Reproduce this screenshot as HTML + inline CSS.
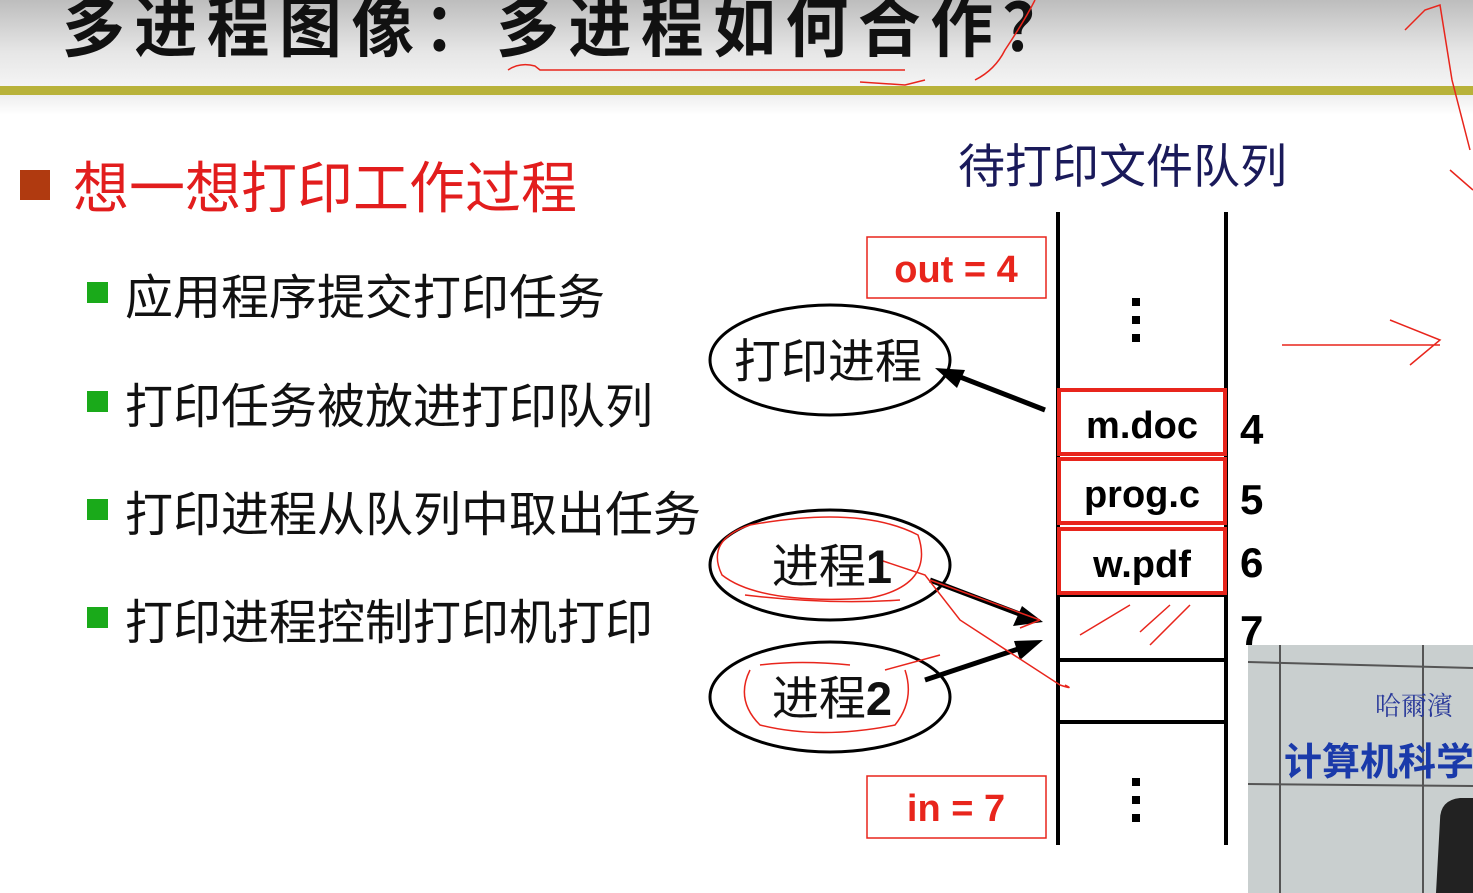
<!DOCTYPE html>
<html><head><meta charset="utf-8"><style>
html,body{margin:0;padding:0;width:1473px;height:893px;overflow:hidden;background:#fff;font-family:"Liberation Sans","Noto Sans CJK SC",sans-serif}
.a{position:absolute;white-space:nowrap}
</style></head><body>
<div class="a" style="left:0;top:0;width:1473px;height:86px;background:linear-gradient(#bdbdbd,#e6e6e6 60%,#f4f4f4)"></div>
<div class="a" style="left:0;top:86px;width:1473px;height:9px;background:#b8b23a"></div>
<div class="a" style="left:0;top:95px;width:1473px;height:20px;background:linear-gradient(#eee,#fff)"></div>
<div class="a" style="left:62px;top:-26px;font-family:'Noto Sans CJK SC',sans-serif;font-size:58px;letter-spacing:9px;font-weight:bold;color:#111;transform:scale(1.08,1.15);transform-origin:left top">多进程图像：多进程如何合作？</div>
<div class="a" style="left:20px;top:170px;width:30px;height:30px;background:#b03a10"></div>
<div class="a" style="left:73px;top:144px;font-size:56px;color:#e21d1d">想一想打印工作过程</div>
<div class="a" style="left:87px;top:282px;width:21px;height:21px;background:#1aaa1a"></div>
<div class="a" style="left:125px;top:258px;font-size:48px;color:#111">应用程序提交打印任务</div>
<div class="a" style="left:87px;top:391px;width:21px;height:21px;background:#1aaa1a"></div>
<div class="a" style="left:125px;top:367px;font-size:48px;color:#111">打印任务被放进打印队列</div>
<div class="a" style="left:87px;top:499px;width:21px;height:21px;background:#1aaa1a"></div>
<div class="a" style="left:125px;top:475px;font-size:48px;color:#111">打印进程从队列中取出任务</div>
<div class="a" style="left:87px;top:607px;width:21px;height:21px;background:#1aaa1a"></div>
<div class="a" style="left:125px;top:583px;font-size:48px;color:#111">打印进程控制打印机打印</div>
<div class="a" style="left:958px;top:128px;font-size:47px;color:#1a1a5a">待打印文件队列</div>
<div class="a" style="left:1248px;top:645px;width:225px;height:248px;background:#c9cfcf"></div>
<svg class="a" style="left:0;top:0" width="1473" height="893">
<g stroke="#555" stroke-width="2"><line x1="1248" y1="662" x2="1473" y2="668"/><line x1="1248" y1="784" x2="1473" y2="786"/><line x1="1280" y1="645" x2="1280" y2="893"/><line x1="1423" y1="645" x2="1423" y2="893"/></g>
<text x="1375" y="715" font-size="26" fill="#2a3a9a" font-family="Noto Serif CJK SC,serif">哈爾濱</text>
<text x="1284" y="775" font-size="38" font-weight="bold" fill="#1a3aaa" font-family="Noto Sans CJK SC,sans-serif">计算机科学</text>
<path d="M1440 820 Q1440 800 1460 798 L1473 798 L1473 893 L1436 893 Z" fill="#222"/>
<g stroke="#000" stroke-width="4" fill="none">
<line x1="1058" y1="212" x2="1058" y2="845"/><line x1="1226" y1="212" x2="1226" y2="845"/>
<line x1="1058" y1="595" x2="1226" y2="595"/><line x1="1058" y1="660" x2="1226" y2="660"/><line x1="1058" y1="722" x2="1226" y2="722"/>
<ellipse cx="830" cy="360" rx="120" ry="55" stroke-width="3"/>
<ellipse cx="830" cy="565" rx="120" ry="55" stroke-width="3"/>
<ellipse cx="830" cy="697" rx="120" ry="55" stroke-width="3"/>
<line x1="1045" y1="410" x2="955" y2="375" stroke-width="5"/>
<line x1="930" y1="580" x2="1030" y2="618" stroke-width="5"/>
<line x1="925" y1="680" x2="1030" y2="645" stroke-width="5"/>
</g>
<polygon points="935,368 965,370 957,388" fill="#000"/>
<polygon points="1043,622 1013,626 1022,606" fill="#000"/>
<polygon points="1043,640 1020,660 1014,641" fill="#000"/>
<g fill="#000"><rect x="1132" y="298" width="8" height="8"/><rect x="1132" y="316" width="8" height="8"/><rect x="1132" y="334" width="8" height="8"/>
<rect x="1132" y="778" width="8" height="8"/><rect x="1132" y="796" width="8" height="8"/><rect x="1132" y="814" width="8" height="8"/></g>
<g stroke="#e8251c" stroke-width="4" fill="none">
<rect x="1059" y="390" width="166" height="64"/><rect x="1059" y="459" width="166" height="64"/><rect x="1059" y="529" width="166" height="64"/>
</g>
<g stroke="#e8251c" stroke-width="1.5" fill="none">
<rect x="867" y="237" width="179" height="61"/><rect x="867" y="776" width="179" height="62"/>
<path d="M508 70 Q520 62 535 66 L540 70 L905 70"/><path d="M860 82 L905 85 L925 80"/>
<path d="M975 80 Q995 70 1005 50 Q1025 20 1035 0"/>
<path d="M1405 30 L1425 10 L1440 5 L1452 80 L1470 150 M1450 170 L1473 190"/>
<path d="M1282 345 L1440 345 M1390 320 L1440 340 L1410 365"/>
<path d="M750 525 Q860 505 918 535 Q935 585 870 598 Q760 605 722 575 Q705 540 750 525 M745 595 Q830 605 900 600"/>
<path d="M880 560 L925 575 L960 620 L1060 685 Q1075 690 1065 685"/>
<path d="M930 580 L1040 620 M1020 628 L1040 620"/>
<path d="M760 665 Q800 660 850 665 M750 670 Q735 700 760 725 Q820 740 895 725 Q915 700 905 670 M885 670 L940 655"/>
<path d="M1080 635 L1130 605 M1140 632 L1170 605 M1150 645 L1190 605"/>
</g>
<g font-family="Liberation Sans,sans-serif" font-weight="bold" font-size="38">
<text x="1142" y="438" text-anchor="middle">m.doc</text>
<text x="1142" y="507" text-anchor="middle">prog.c</text>
<text x="1142" y="577" text-anchor="middle">w.pdf</text>
<text x="1240" y="444" font-size="42">4</text><text x="1240" y="514" font-size="42">5</text><text x="1240" y="577" font-size="42">6</text><text x="1240" y="645" font-size="42">7</text>
<text x="956" y="282" text-anchor="middle" fill="#e8251c">out = 4</text>
<text x="956" y="821" text-anchor="middle" fill="#e8251c">in = 7</text>
</g>
<g font-family="Liberation Sans,Noto Sans CJK SC,sans-serif" font-size="47" fill="#111">
<text x="828" y="378" text-anchor="middle">打印进程</text>
<text x="832" y="583" text-anchor="middle">进程<tspan font-weight="bold">1</tspan></text>
<text x="832" y="715" text-anchor="middle">进程<tspan font-weight="bold">2</tspan></text>
</g>
</svg>
</body></html>
